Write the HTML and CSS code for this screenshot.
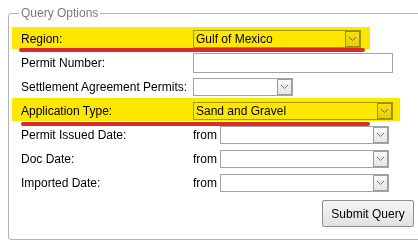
FILE: index.html
```html
<!DOCTYPE html>
<html>
<head>
<meta charset="utf-8">
<link rel="stylesheet" href="styles.css">
</head>
<body>
<form class="form">
  <fieldset class="query">
    <legend class="legend">Query Options</legend>

    <div class="row mark mark-region">
      <span class="lbl">Region:</span>
      <div class="select w-region"><span class="val">Gulf of Mexico</span><span class="arrow"><svg width="9" height="6" viewBox="0 0 9 6"><path d="M1 1 L4.5 4.5 L8 1" fill="none" stroke="#7a7a7a" stroke-width="1"/></svg></span></div>
    </div>

    <div class="row">
      <span class="lbl">Permit Number:</span>
      <div class="input"></div>
    </div>

    <div class="row">
      <span class="lbl">Settlement Agreement Permits:</span>
      <div class="select w-small"><span class="val"></span><span class="arrow"><svg width="9" height="6" viewBox="0 0 9 6"><path d="M1 1 L4.5 4.5 L8 1" fill="none" stroke="#7a7a7a" stroke-width="1"/></svg></span></div>
    </div>

    <div class="row mark mark-type">
      <span class="lbl">Application Type:</span>
      <div class="select w-type"><span class="val">Sand and Gravel</span><span class="arrow"><svg width="9" height="6" viewBox="0 0 9 6"><path d="M1 1 L4.5 4.5 L8 1" fill="none" stroke="#7a7a7a" stroke-width="1"/></svg></span></div>
    </div>

    <div class="row">
      <span class="lbl">Permit Issued Date:</span>
      <div class="ctl"><span class="from">from</span><div class="select w-date"><span class="val"></span><span class="arrow"><svg width="9" height="6" viewBox="0 0 9 6"><path d="M1 1 L4.5 4.5 L8 1" fill="none" stroke="#7a7a7a" stroke-width="1"/></svg></span></div></div>
    </div>

    <div class="row">
      <span class="lbl">Doc Date:</span>
      <div class="ctl"><span class="from">from</span><div class="select w-date"><span class="val"></span><span class="arrow"><svg width="9" height="6" viewBox="0 0 9 6"><path d="M1 1 L4.5 4.5 L8 1" fill="none" stroke="#7a7a7a" stroke-width="1"/></svg></span></div></div>
    </div>

    <div class="row">
      <span class="lbl">Imported Date:</span>
      <div class="ctl"><span class="from">from</span><div class="select w-date"><span class="val"></span><span class="arrow"><svg width="9" height="6" viewBox="0 0 9 6"><path d="M1 1 L4.5 4.5 L8 1" fill="none" stroke="#7a7a7a" stroke-width="1"/></svg></span></div></div>
    </div>

    <div class="actions">
      <button type="button" class="submit">Submit Query</button>
    </div>
  </fieldset>
</form>
</body>
</html>
```

FILE: styles.css
```css
html, body {
  margin: 0;
  padding: 0;
  overflow: hidden;
  background: #ffffff;
}

body {
  font-family: "Liberation Sans", Arial, sans-serif;
  font-size: 12px;
  color: #000000;
}

.form {
  margin: 0;
}

.query {
  margin: 5px 0 0 8px;
  padding: 6px 0 12px 12px;
  width: 430px;
  border: 1px solid #b4b4b4;
  border-radius: 3px;
  box-sizing: border-box;
}

.legend {
  margin-left: -2px;
  padding: 0 2px;
  line-height: 16px;
  color: #7a7a7a;
  font-size: 12px;
}

.row {
  position: relative;
  display: grid;
  grid-template-columns: 172px auto;
  align-items: center;
  height: 24px;
}

.lbl {
  white-space: nowrap;
}

.ctl {
  display: flex;
  align-items: center;
}

.from {
  width: 27px;
}

.select {
  display: flex;
  height: 18px;
  box-sizing: border-box;
  border: 1px solid #a3a3a3;
  background: #ffffff;
}

.val {
  flex: 1;
  padding-left: 2px;
  line-height: 16px;
  font-size: 12px;
}

.arrow {
  display: flex;
  align-items: center;
  justify-content: center;
  width: 15px;
  box-sizing: border-box;
  border: 1px solid #9c9c9c;
  background: linear-gradient(#f7f7f7, #e6e6e6);
}

.w-region { width: 168px; }
.w-small { width: 100px; }
.w-type { width: 200px; }
.w-date { width: 169px; }

.input {
  width: 200px;
  height: 20px;
  box-sizing: border-box;
  border: 1px solid #a3a3a3;
  background: #ffffff;
}

.actions {
  width: 393px;
  display: flex;
  justify-content: flex-end;
  margin-top: 5px;
}

.submit {
  width: 92px;
  height: 27px;
  padding: 0;
  border: 1px solid #8e8e8e;
  border-radius: 2px;
  background: linear-gradient(#f6f6f6, #e1e1e1);
  font-family: "Liberation Sans", Arial, sans-serif;
  font-size: 12px;
  color: #000000;
}

/* highlighter annotations */
.mark::before {
  content: "";
  position: absolute;
  left: -9px;
  background: #ffe700;
  mix-blend-mode: multiply;
  pointer-events: none;
}

.mark::after {
  content: "";
  position: absolute;
  height: 4px;
  background: #dd2a2a;
  border-radius: 2px;
  pointer-events: none;
}

.mark-region::before {
  top: 0;
  width: 358px;
  height: 22px;
}

.mark-region::after {
  top: 21px;
  left: -2px;
  width: 346px;
}

.mark-type::before {
  top: -1px;
  width: 388px;
  height: 23px;
}

.mark-type::after {
  top: 23px;
  left: 0;
  width: 349px;
}
```
